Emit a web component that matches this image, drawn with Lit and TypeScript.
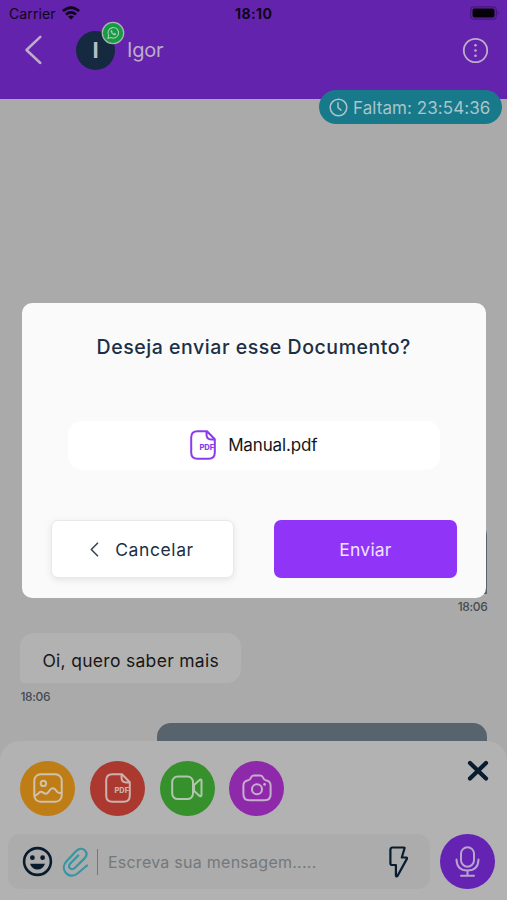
import { LitElement, html, css } from "lit";
import { customElement } from "lit/decorators.js";

const pdfIcon = (cls: string) => html`<svg class=${cls} viewBox="0 0 26 30" fill="none" stroke="currentColor" stroke-width="2" stroke-linejoin="round">
  <path d="M17 1.200H7.500Q1.200 1.200 1.200 7.500v15q0 6.300 6.300 6.300h11q6.300 0 6.300-6.300V9.200L17 1.200zM16.500 1.200v3.300q0 4.900 4.900 4.900h3.200"/>
  <text x="9.500" y="19.600" stroke="none" fill="currentColor" font-size="7.200" font-weight="800" font-family="Inter, sans-serif" textLength="14.500" lengthAdjust="spacingAndGlyphs">PDF</text>
</svg>`;

const galleryIcon = html`<svg width="30" height="30" viewBox="0 0 30 30" fill="none" stroke="currentColor" stroke-width="2" stroke-linecap="round" stroke-linejoin="round">
  <rect x="1.300" y="1.300" width="27.400" height="27.400" rx="6.200"/><circle cx="10.400" cy="10.400" r="2.700"/>
  <path d="M1.800 22.700q3.300-1.300 4.500-3.200c1.300-1.600 3-.6 4.300.4 2.300 1.800 4.300.5 5.600-1.900 1.800-3.300 4.600-3.600 6.800-.6l1.200 1.500q1.500 1.600 4.300.8"/></svg>`;
const videoIcon = html`<svg width="32" height="26" viewBox="0 0 32 26" fill="none" stroke="currentColor" stroke-width="2" stroke-linejoin="round">
  <rect x="1.200" y="1.500" width="20.800" height="22.600" rx="5.500"/><path d="M23 10l5.600-5.100q1.900-1.100 1.900 1v14q0 2.100-1.900 1L23 15.700z"/></svg>`;
const cameraIcon = html`<svg width="30" height="28" viewBox="0 0 30 28" fill="none" stroke="currentColor" stroke-width="2" stroke-linejoin="round">
  <path d="M6.400 6.200c1.600 0 2-1.200 2.600-2.700C9.600 1.900 10.500 1.500 12 1.500h6c1.500 0 2.400.4 3 2 .6 1.500 1 2.700 2.600 2.700q5 .6 5 5.500v8.500q0 6-6 6H7.400q-6 0-6-6v-8.500q0-4.900 5-5.500z"/><circle cx="15" cy="15.300" r="5"/><circle cx="22.600" cy="10.400" r="1.400" fill="currentColor" stroke="none"/></svg>`;

@customElement("app-header")
class AppHeader extends LitElement {
  static styles = css`
    :host { display: block; height: 98.500px; background: #6423ac; color: #bdadcb; font-family: Inter, sans-serif; }
    .status { height: 28px; padding: 0 7px 0 9px; display: grid; grid-template-columns: 1fr auto 1fr; align-items: center; color: #0d0616; font-size: 14px; }
    .carrier { display: flex; align-items: center; gap: 6px; letter-spacing: .1px; line-height: 26px; height: 28px; }
    .carrier svg { margin-top: -3px; }
    .clock { font-weight: 700; letter-spacing: .4px; line-height: 28px; height: 28px; margin-left: -1.500px; }
    .battery { justify-self: end; margin-top: -2px; }
    .bar { height: 44px; display: flex; align-items: center; padding: 0 18px 0 24px; }
    .avatar { position: relative; width: 39px; height: 39px; margin-left: 33px; border-radius: 50%; background: #152a40; color: #b9bcc1; display: grid; place-items: center; font: 700 22px Inter, sans-serif; }
    .badge { position: absolute; left: 25px; top: -9.500px; display: block; }
    .name { flex: 1; margin-left: 12px; font-size: 20px; letter-spacing: -.2px; }
    svg { display: block; }
  `;
  render() {
    return html`
      <div class="status">
        <div class="carrier"><span>Carrier</span>
          <svg width="18" height="14" viewBox="0 0 18 14" fill="none" stroke="currentColor" stroke-width="2.700"><path d="M.9 5.100q8.100-7 16.200 0M4 8.500q5-4.200 10 0"/><path d="M9 13.600l-3-3q3-2.400 6 0z" fill="currentColor" stroke="none"/></svg>
        </div>
        <div class="clock">18:10</div>
        <svg class="battery" width="30" height="14" viewBox="0 0 30 14"><rect x=".7" y=".8" width="25.600" height="12.400" rx="3.500" fill="none" stroke="#44177a" stroke-width="1.200"/><rect x="2.500" y="2.600" width="22" height="8.800" rx="2" fill="#050208"/><path d="M27.700 4.600q2 2.400 0 4.800z" fill="#44177a"/></svg>
      </div>
      <div class="bar">
        <svg width="19" height="30" viewBox="0 0 19 30" fill="none" stroke="currentColor" stroke-width="2.500" stroke-linecap="round" stroke-linejoin="round"><path d="M16.300 1.800L2.500 15l13.800 13"/></svg>
        <div class="avatar">I
          <svg class="badge" width="24" height="24" viewBox="0 0 24 24"><circle cx="12" cy="12" r="10.700" fill="#149b43" stroke="#a9b5ad" stroke-width="1.300"/><g fill="none" stroke="#a9c9b3" stroke-width="1.100" stroke-linejoin="round"><path d="M6.900 17.500l.8-3a5.300 5.300 0 1 1 2.100 2z"/><path d="M10.300 9.100q-1.300 1 .4 3.300 2.200 2.600 3.900 1.500l.4-1.100-1.500-.8-.8.7q-1.300-.4-1.700-1.700l.5-.6z" fill="#a9c9b3" stroke-width=".3"/></g></svg>
        </div>
        <div class="name">Igor</div>
        <svg width="27" height="27" viewBox="0 0 27 27" fill="none" stroke="currentColor" stroke-width="1.800"><circle cx="13.500" cy="13.500" r="11.700"/><g fill="currentColor" stroke="none"><circle cx="13.500" cy="8.300" r="1.300"/><circle cx="13.500" cy="13.500" r="1.300"/><circle cx="13.500" cy="18.700" r="1.300"/></g></svg>
      </div>`;
  }
}

@customElement("chat-thread")
class ChatThread extends LitElement {
  static styles = css`
    :host { display: flex; flex-direction: column; background: #aaaaaa; font-family: Inter, sans-serif; overflow: hidden; padding: 0 19.600px 0 20.400px; box-sizing: border-box; }
    .sent { align-self: flex-end; width: 330px; border-radius: 14px 14px 0 14px; background: #57636d; flex: none; }
    .first { margin-top: 423px; height: 72px; }
    .next { height: 70px; margin-top: 17.500px; }
    .time { font-size: 12px; line-height: 16px; color: #454b51; font-weight: 500; letter-spacing: -.35px; }
    .right { align-self: flex-end; margin-top: 5px; }
    .received { align-self: flex-start; margin-top: 18px; box-sizing: border-box; width: 221px; height: 50px; line-height: 56px; padding-left: 22px; border-radius: 14px 14px 14px 4px; background: #b2b2b2; color: #171717; font-size: 17.500px; white-space: nowrap; letter-spacing: .3px; flex: none; }
    .left { margin-top: 6.500px; }
  `;
  render() {
    return html`<div class="sent first"></div><div class="time right">18:06</div>
      <div class="received">Oi, quero saber mais</div><div class="time left">18:06</div>
      <div class="sent next"></div>`;
  }
}

@customElement("message-composer")
class MessageComposer extends LitElement {
  static styles = css`
    :host { display: block; box-sizing: border-box; height: 159px; background: #b2b2b2; border-radius: 20px 20px 0 0; padding: 19.500px 12px 0 8.400px; font-family: Inter, sans-serif; color: #071c2f; }
    svg { display: block; }
    .actions { display: flex; gap: 14.700px; padding-left: 12px; height: 55px; }
    .round { width: 55px; height: 55px; border-radius: 50%; display: grid; place-items: center; flex: none; }
    .gallery { background: #bf7d15; color: #cfc1aa; }
    .document { background: #ab392f; color: #cbb2af; }
    .video { background: #36902c; color: #b0c7ad; }
    .camera { background: #8e2aaa; color: #c5afcb; }
    .mic { background: #6423b2; color: #b8a5cb; }
    .pdf { width: 26px; height: 30px; }
    .close { margin-left: auto; margin-right: 6.500px; margin-top: -1px; }
    .row { display: flex; margin-top: 18.500px; gap: 10px; }
    .field { flex: 1; height: 55px; border-radius: 12px; background: #acacac; display: flex; align-items: center; padding: 0 22px 0 13.500px; box-sizing: border-box; }
    .clip { margin-left: 8px; }
    .caret { width: 1.500px; height: 26px; margin: 0 9.500px 0 8px; background: #74787b; }
    .hint { flex: 1; color: #74787b; font-size: 16px; letter-spacing: .26px; white-space: nowrap; }
  `;
  render() {
    return html`
      <div class="actions">
        <div class="round gallery">${galleryIcon}</div>
        <div class="round document">${pdfIcon("pdf")}</div>
        <div class="round video">${videoIcon}</div>
        <div class="round camera">${cameraIcon}</div>
        <svg class="close" width="22" height="22" viewBox="0 0 22 22" fill="none" stroke="currentColor" stroke-width="4.200" stroke-linecap="round"><path d="M3 3l16 15.500M19 3L3 18.500"/></svg>
      </div>
      <div class="row">
        <div class="field">
          <svg width="31" height="31" viewBox="0 0 31 31"><circle cx="15.500" cy="15.500" r="13.400" fill="none" stroke="currentColor" stroke-width="2.600"/><g fill="currentColor"><circle cx="10.400" cy="11.700" r="2.400"/><circle cx="20.600" cy="11.700" r="2.400"/><path d="M8 17.800h15q-2 5.800-7.500 5.800T8 17.800z"/></g></svg>
          <svg class="clip" width="28" height="30" viewBox="0 0 27 30" fill="none" stroke="#3795a4" stroke-width="2.200" stroke-linecap="round" stroke-linejoin="round"><path d="M25.500 18.500L16 26.500c-4.500 3.700-9.500 2.300-12-1-2.700-3.700-2-8.300 1.300-11.500L14.500 4.300c3-3.200 6.700-3.300 9-.9 2.300 2.500 1.800 5.600-.7 8.200L13.200 21c-1.600 1.600-3.700 1.500-4.900.1-1.200-1.500-.9-3.100.5-4.600l7.900-8"/></svg>
          <div class="caret"></div>
          <div class="hint">Escreva sua mensagem.....</div>
          <svg width="19" height="32" viewBox="0 0 19 32" fill="none" stroke="currentColor" stroke-width="2.200" stroke-linejoin="round"><path d="M3.500 1.500h11.300q1 0 .7 1L12.800 11.500h4.400q1.200 0 .8 1.100L8.600 29.700q-1.400 1.700-1.700-.4V19H3Q1.400 19 1.400 17.300V4q0-2.500 2.100-2.500z"/></svg>
        </div>
        <div class="round mic"><svg width="25" height="31" viewBox="0 0 25 31" fill="none" stroke="currentColor" stroke-width="2" stroke-linecap="round"><rect x="6" y="1.200" width="13" height="19.500" rx="6.500"/><path d="M1.500 13.500Q1.800 24.500 12.500 24.500T23.500 13.500M12.500 24.500v5M6 29.700h13"/></svg></div>
      </div>`;
  }
}

@customElement("confirm-dialog")
class ConfirmDialog extends LitElement {
  static styles = css`
    :host { display: flex; flex-direction: column; box-sizing: border-box; width: 464.500px; height: 295.500px; border-radius: 10px; background: #fafafa; padding: 29.500px 29px 0; font-family: Inter, sans-serif; color: #1b2f45; }
    .title { text-align: center; font-size: 19.500px; line-height: 30px; font-weight: 500; white-space: nowrap; letter-spacing: .55px; }
    .file { margin: 58.500px 17px 0 17px; height: 49px; border-radius: 14px; background: #fff; color: #151515; font-size: 17px; letter-spacing: -.15px; display: flex; align-items: center; justify-content: center; gap: 12px; }
    .pdf { width: 26px; height: 30px; color: #8a3bee; display: block; }
    .buttons { display: flex; justify-content: space-between; margin-top: 50.300px; }
    .button { box-sizing: border-box; width: 183px; height: 58.500px; border-radius: 7px; display: flex; align-items: center; justify-content: center; font-size: 17.500px; }
    .cancel { background: #fff; border: 1px solid #e8e9eb; box-shadow: 0 2px 7px rgba(0,0,0,.09); gap: 16px; letter-spacing: .6px; }
    .send { background: #9035f7; color: #f0e2ff; letter-spacing: .2px; }
  `;
  render() {
    return html`<div class="title">Deseja enviar esse Documento?</div>
      <div class="file">${pdfIcon("pdf")}<span>Manual.pdf</span></div>
      <div class="buttons">
        <div class="button cancel"><svg width="9" height="15" viewBox="0 0 9 15" fill="none" stroke="#384655" stroke-width="1.600" stroke-linecap="round" stroke-linejoin="round"><path d="M7.500 1.200L1.300 7.500l6.200 6.300"/></svg><span>Cancelar</span></div>
        <div class="button send">Enviar</div>
      </div>`;
  }
}

@customElement("app-root")
class AppRoot extends LitElement {
  static styles = css`
    :host { display: block; position: relative; width: 507px; height: 900px; overflow: hidden; background: #aaaaaa; font-family: Inter, sans-serif; }
    .page { display: flex; flex-direction: column; height: 900px; }
    .thread { flex: 1; min-height: 0; }
    .timer { position: absolute; right: 5px; top: 90px; width: 183px; height: 34px; box-sizing: border-box; border-radius: 17px; background: #18798a; color: #a9c5ca; display: flex; align-items: center; gap: 5px; padding-left: 10px; font-size: 17px; letter-spacing: .07px; white-space: nowrap; }
    .timer span { padding-top: 1px; }
    .dialog { position: absolute; left: 21.500px; top: 302.500px; }
  `;
  render() {
    return html`<div class="page"><app-header></app-header><chat-thread class="thread"></chat-thread><message-composer></message-composer></div>
      <div class="timer"><svg width="19" height="19" viewBox="0 0 19 19" fill="none" stroke="currentColor" stroke-width="1.500" stroke-linecap="round"><circle cx="9.500" cy="9.500" r="8.300"/><path d="M9 4.800v4.800l3 2.500"/></svg><span>Faltam: 23:54:36</span></div>
      <confirm-dialog class="dialog"></confirm-dialog>`;
  }
}
